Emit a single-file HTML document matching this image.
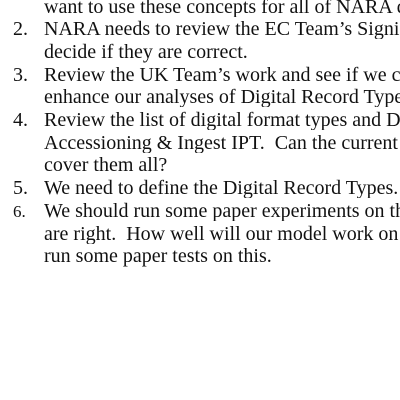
<!DOCTYPE html>
<html><head><meta charset="utf-8"><style>
html,body{margin:0;padding:0;background:#fff;width:400px;height:400px;overflow:hidden;position:relative}
div{position:absolute;white-space:nowrap;font-family:"Liberation Serif",serif;font-size:20px;line-height:1;color:#111}
.n{left:13px}.t{left:44px}
.w{width:356px;overflow:hidden}
</style></head><body>
<div class="t w" style="top:-3.5px">want to use these concepts for all of NARA digital</div>
<div class="n" style="top:19.2px">2.</div><div class="t w" style="top:19.2px">NARA needs to review the EC Team’s Significant</div>
<div class="t" style="top:41.9px">decide if they are correct.</div>
<div class="n" style="top:64.6px">3.</div><div class="t w" style="top:64.6px">Review the UK Team’s work and see if we can</div>
<div class="t w" style="top:87.3px">enhance our analyses of Digital Record Types</div>
<div class="n" style="top:110px">4.</div><div class="t w" style="top:110px">Review the list of digital format types and Digital</div>
<div class="t w" style="top:132.7px">Accessioning &amp; Ingest IPT.&nbsp; Can the current</div>
<div class="t" style="top:155.4px">cover them all?</div>
<div class="n" style="top:178.1px">5.</div><div class="t w" style="top:178.1px">We need to define the Digital Record Types.</div>
<div class="n" style="top:202.5px;font-size:17px">6.</div><div class="t w" style="top:200.8px">We should run some paper experiments on the</div>
<div class="t w" style="top:223.5px">are right.&nbsp; How well will our model work on</div>
<div class="t" style="top:246.2px">run some paper tests on this.</div>
</body></html>
